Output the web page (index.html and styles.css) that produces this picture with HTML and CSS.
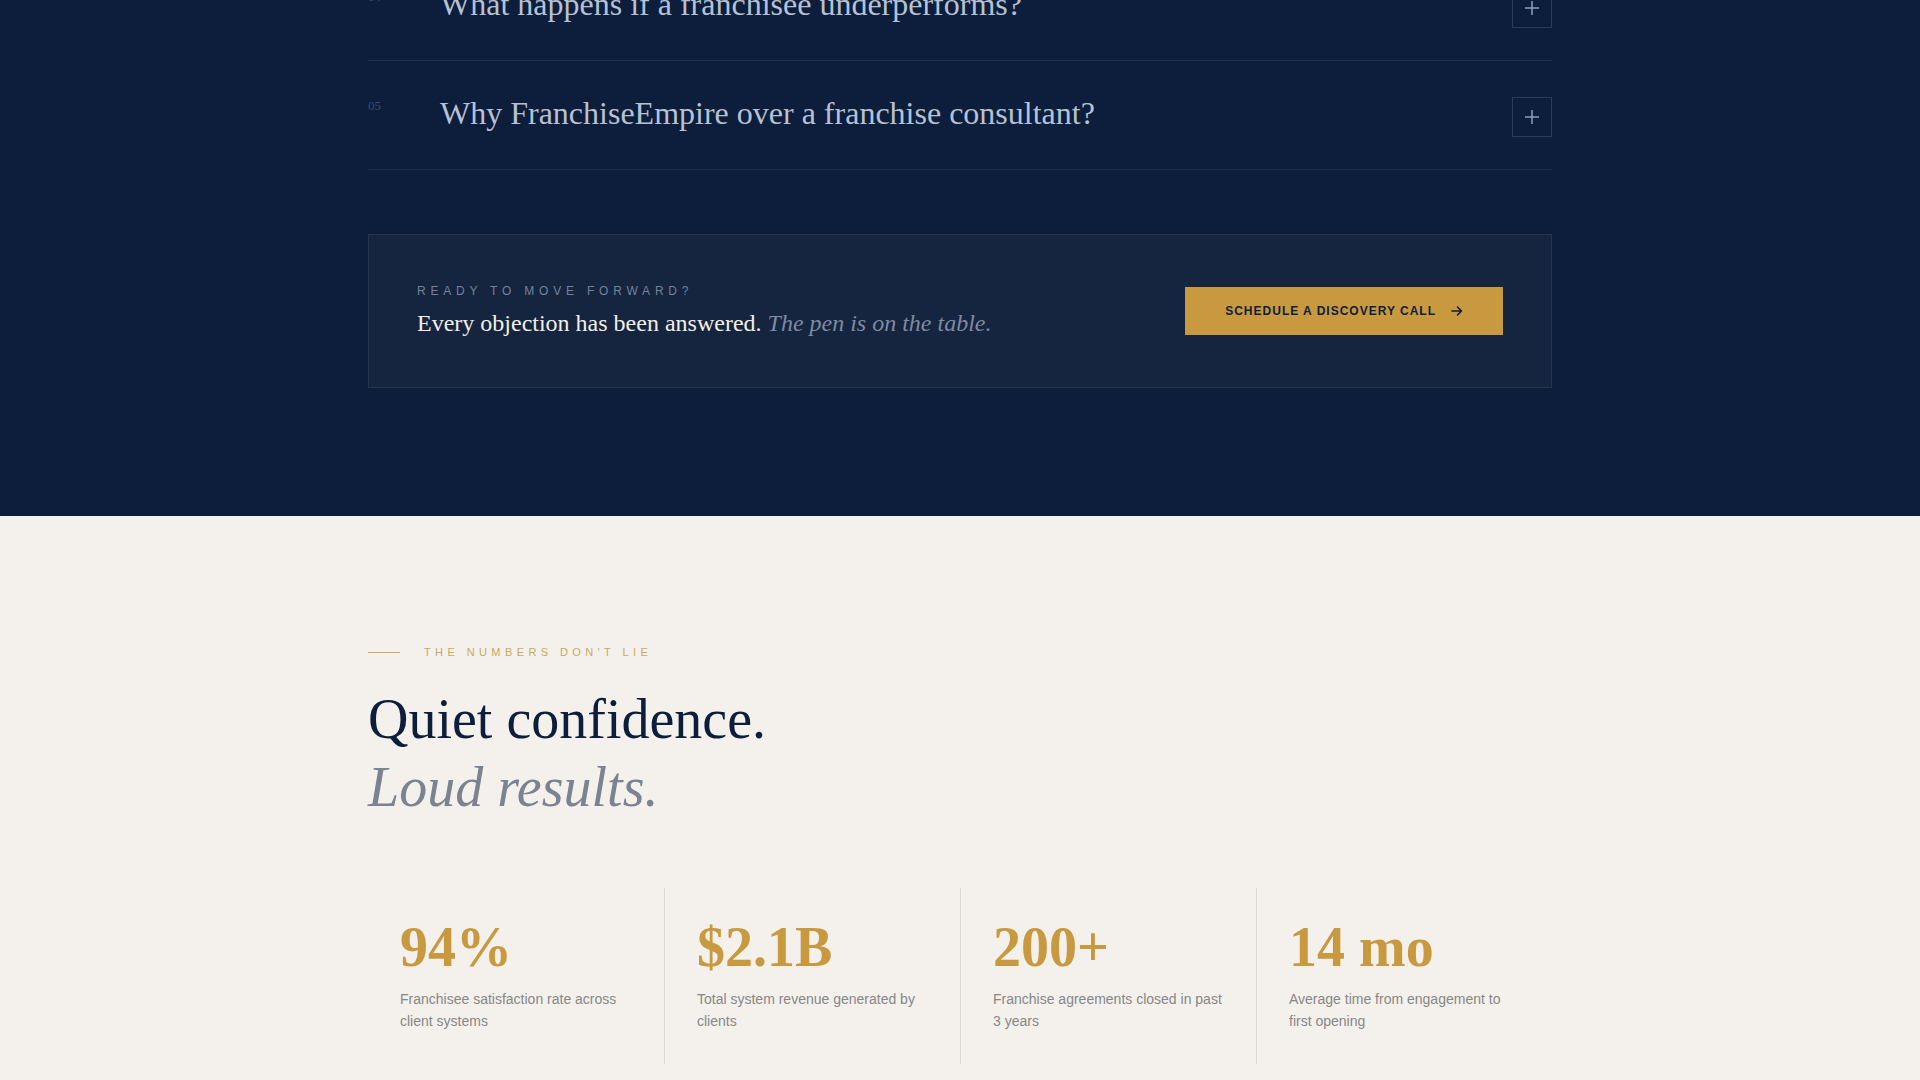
FILE: index.html
```html
<!DOCTYPE html>
<html lang="en">
<head>
<meta charset="UTF-8">
<meta name="viewport" content="width=device-width, initial-scale=1.0">
<title>FranchiseEmpire — FAQ &amp; Results</title>
<link rel="stylesheet" href="styles.css">
</head>
<body>
<section class="faq">
  <div class="wrap">
    <div class="faq-list">
      <div class="faq-item">
        <span class="faq-num">04</span>
        <div class="faq-q">What happens if a franchisee underperforms?</div>
        <button class="faq-toggle" aria-label="Expand">
          <svg width="14" height="14" viewBox="0 0 14 14"><path d="M7 0v14M0 7h14" stroke="currentColor" stroke-width="1.5" fill="none"/></svg>
        </button>
      </div>
      <div class="faq-item">
        <span class="faq-num">05</span>
        <div class="faq-q">Why FranchiseEmpire over a franchise consultant?</div>
        <button class="faq-toggle" aria-label="Expand">
          <svg width="14" height="14" viewBox="0 0 14 14"><path d="M7 0v14M0 7h14" stroke="currentColor" stroke-width="1.5" fill="none"/></svg>
        </button>
      </div>
    </div>

    <div class="cta">
      <div class="cta-text">
        <div class="cta-eyebrow">Ready to move forward?</div>
        <div class="cta-title">Every objection has been answered. <em>The pen is on the table.</em></div>
      </div>
      <a class="cta-btn" href="#">Schedule a discovery call
        <svg width="12" height="12" viewBox="0 0 12 12"><path d="M1 6h9.5M6.5 2l4 4-4 4" stroke="currentColor" stroke-width="1.6" fill="none" stroke-linecap="round" stroke-linejoin="round"/></svg>
      </a>
    </div>
  </div>
</section>

<section class="numbers">
  <div class="wrap">
    <div class="eyebrow"><span class="eyebrow-line"></span>The numbers don't lie</div>
    <h2 class="headline">Quiet confidence.<br><em>Loud results.</em></h2>
    <div class="stats">
      <div class="stat">
        <div class="stat-value">94%</div>
        <p class="stat-label">Franchisee satisfaction rate across client systems</p>
      </div>
      <div class="stat">
        <div class="stat-value">$2.1B</div>
        <p class="stat-label">Total system revenue generated by clients</p>
      </div>
      <div class="stat">
        <div class="stat-value">200+</div>
        <p class="stat-label">Franchise agreements closed in past 3 years</p>
      </div>
      <div class="stat">
        <div class="stat-value">14 mo</div>
        <p class="stat-label">Average time from engagement to first opening</p>
      </div>
    </div>
  </div>
</section>
</body>
</html>
```

FILE: styles.css
```css
*{margin:0;padding:0;box-sizing:border-box}
body{font-family:'Liberation Sans',Arial,sans-serif;background:#f4f1ec;color:#0c1e3c}
.wrap{max-width:1184px;margin:0 auto}

/* faq, dark band */
.faq{background:#0c1e3c;padding-bottom:128px}
.faq-list{margin-top:-49px;border-top:1px solid #1e2f4d}
.faq-item{display:flex;align-items:flex-start;padding:32px 0;border-bottom:1px solid #1e2f4d}
.faq-num{width:72px;flex-shrink:0;margin-top:6px;font-family:'Liberation Serif',serif;font-size:13px;line-height:14px;color:#3d4c68}
.faq-q{flex:1;font-family:'Liberation Serif',serif;font-size:32px;line-height:1.3;color:#b7c1d2}
.faq-toggle{width:40px;height:40px;margin-top:4px;flex-shrink:0;display:flex;align-items:center;justify-content:center;background:transparent;border:1px solid #2a3b59;color:#8e9db7;cursor:pointer}

.cta{margin-top:64px;display:flex;align-items:center;justify-content:space-between;padding:48px;background:#15243f;border:1px solid #23344f}
.cta-eyebrow{font-size:12px;line-height:16px;letter-spacing:4.8px;text-transform:uppercase;color:#75829a;margin-bottom:8px}
.cta-title{font-family:'Liberation Serif',serif;font-size:24px;line-height:32px;color:#f3efe7}
.cta-title em{color:#7f8ba1}
.cta-btn{display:flex;align-items:center;gap:15px;height:48px;padding:0 40px;background:#c9993f;color:#0c1e3c;font-size:12px;font-weight:700;letter-spacing:1px;text-transform:uppercase;text-decoration:none}

/* numbers, light band */
.numbers{background:#f4f1ec;padding:128px 0}
.eyebrow{display:flex;align-items:center;gap:24px;font-size:11px;line-height:16px;letter-spacing:4.4px;text-transform:uppercase;color:#c9a861;margin-bottom:25px}
.eyebrow-line{width:32px;height:1px;background:#c9a861}
.headline{font-family:'Liberation Serif',serif;font-weight:400;font-size:56px;line-height:1.22;color:#0c1e3c}
.headline em{color:#7b8390}
.stats{margin-top:66px;display:grid;grid-template-columns:repeat(4,1fr)}
.stat{padding:31px 32px 32px}
.stat+.stat{border-left:1px solid #dfdbd3}
.stat-value{font-family:'Liberation Serif',serif;font-weight:700;font-size:56px;line-height:1;color:#c9993f}
.stat-label{margin-top:13px;font-size:14px;line-height:1.6;color:#878787}
```
